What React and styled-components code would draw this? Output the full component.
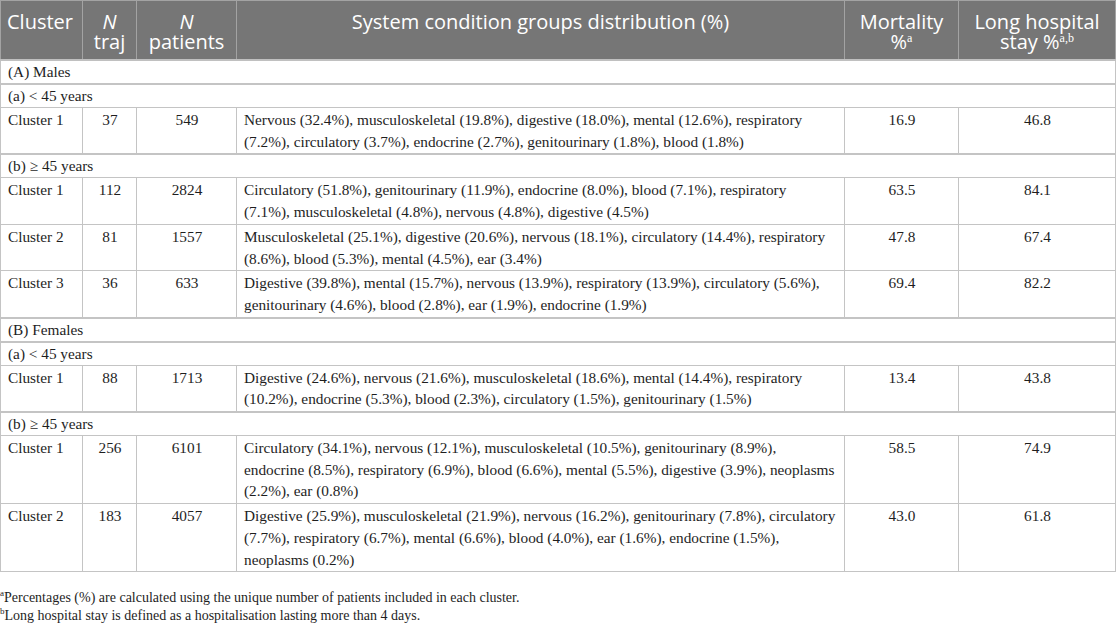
import React from 'react'
import styled, { createGlobalStyle } from 'styled-components'

const GlobalStyle = createGlobalStyle`
  html, body {
    margin: 0;
    padding: 0;
    background: #ffffff;
  }
`

const Page = styled.div`
  width: 1116px;
`

const Table = styled.table`
  width: 1115px;
  border-collapse: collapse;
  table-layout: fixed;
`

const HeadCell = styled.th`
  background: #767676;
  color: #ffffff;
  font-family: "Open Sans", "Noto Sans", sans-serif;
  font-weight: 400;
  font-size: 20px;
  line-height: 20px;
  text-align: ${p => (p.$left ? 'left' : 'center')};
  vertical-align: top;
  padding: 11px 4px 7px ${p => (p.$left ? '6px' : '4px')};
  border: 1px solid #a3a3a3;
  border-bottom: 2px solid #c0c0c0;
  white-space: nowrap;

  i {
    font-style: italic;
  }
  sup {
    font-family: "Liberation Serif", serif;
    font-size: 12px;
    line-height: 0;
    vertical-align: 7px;
  }
`

const Cell = styled.td`
  font-family: "Liberation Serif", "Times New Roman", serif;
  font-size: 15.3px;
  color: #1e1e1e;
  border: 1px solid #c4c4c4;
  line-height: 21.7px;
  padding: 1px 6px 1px 7px;
  vertical-align: top;
  white-space: nowrap;
  text-align: ${p => (p.$center ? 'center' : 'left')};
`

const GroupCell = styled.td`
  font-family: "Liberation Serif", "Times New Roman", serif;
  font-size: 15.3px;
  color: #1e1e1e;
  border: 1px solid #c4c4c4;
  border-top-width: 2px;
  line-height: 21px;
  padding: 0 7px 1px;
  text-align: left;
`

const Line = styled.div`
  white-space: nowrap;
`

const Notes = styled.div`
  font-family: "Liberation Serif", "Times New Roman", serif;
  font-size: 14px;
  color: #1e1e1e;
  line-height: 17.5px;
  padding-top: 17px;

  sup {
    font-size: 9px;
    line-height: 0;
    vertical-align: 6px;
  }
`

const groups = [
  { label: '(A) Males' },
  { label: '(a) < 45 years' },
  {
    row: ['Cluster 1', '37', '549', [
      'Nervous (32.4%), musculoskeletal (19.8%), digestive (18.0%), mental (12.6%), respiratory',
      '(7.2%), circulatory (3.7%), endocrine (2.7%), genitourinary (1.8%), blood (1.8%)',
    ], '16.9', '46.8'],
  },
  { label: '(b) \u2265 45 years' },
  {
    row: ['Cluster 1', '112', '2824', [
      'Circulatory (51.8%), genitourinary (11.9%), endocrine (8.0%), blood (7.1%), respiratory',
      '(7.1%), musculoskeletal (4.8%), nervous (4.8%), digestive (4.5%)',
    ], '63.5', '84.1'],
  },
  {
    row: ['Cluster 2', '81', '1557', [
      'Musculoskeletal (25.1%), digestive (20.6%), nervous (18.1%), circulatory (14.4%), respiratory',
      '(8.6%), blood (5.3%), mental (4.5%), ear (3.4%)',
    ], '47.8', '67.4'],
  },
  {
    row: ['Cluster 3', '36', '633', [
      'Digestive (39.8%), mental (15.7%), nervous (13.9%), respiratory (13.9%), circulatory (5.6%),',
      'genitourinary (4.6%), blood (2.8%), ear (1.9%), endocrine (1.9%)',
    ], '69.4', '82.2'],
  },
  { label: '(B) Females' },
  { label: '(a) < 45 years' },
  {
    row: ['Cluster 1', '88', '1713', [
      'Digestive (24.6%), nervous (21.6%), musculoskeletal (18.6%), mental (14.4%), respiratory',
      '(10.2%), endocrine (5.3%), blood (2.3%), circulatory (1.5%), genitourinary (1.5%)',
    ], '13.4', '43.8'],
  },
  { label: '(b) \u2265 45 years' },
  {
    row: ['Cluster 1', '256', '6101', [
      'Circulatory (34.1%), nervous (12.1%), musculoskeletal (10.5%), genitourinary (8.9%),',
      'endocrine (8.5%), respiratory (6.9%), blood (6.6%), mental (5.5%), digestive (3.9%), neoplasms',
      '(2.2%), ear (0.8%)',
    ], '58.5', '74.9'],
  },
  {
    row: ['Cluster 2', '183', '4057', [
      'Digestive (25.9%), musculoskeletal (21.9%), nervous (16.2%), genitourinary (7.8%), circulatory',
      '(7.7%), respiratory (6.7%), mental (6.6%), blood (4.0%), ear (1.6%), endocrine (1.5%),',
      'neoplasms (0.2%)',
    ], '43.0', '61.8'],
  },
]

const App = () => {
  return (
    <Page>
      <GlobalStyle />
      <Table>
        <colgroup>
          <col style={{ width: 82 }} />
          <col style={{ width: 54 }} />
          <col style={{ width: 100 }} />
          <col style={{ width: 608 }} />
          <col style={{ width: 114 }} />
          <col style={{ width: 157 }} />
        </colgroup>
        <thead>
          <tr>
            <HeadCell $left>Cluster</HeadCell>
            <HeadCell><i>N</i><br />traj</HeadCell>
            <HeadCell><i>N</i><br />patients</HeadCell>
            <HeadCell>System condition groups distribution (%)</HeadCell>
            <HeadCell>Mortality<br />%<sup>a</sup></HeadCell>
            <HeadCell>Long hospital<br />stay %<sup>a,b</sup></HeadCell>
          </tr>
        </thead>
        <tbody>
          {groups.map((g, i) =>
            g.label ? (
              <tr key={i}>
                <GroupCell colSpan={6}>{g.label}</GroupCell>
              </tr>
            ) : (
              <tr key={i}>
                <Cell>{g.row[0]}</Cell>
                <Cell $center>{g.row[1]}</Cell>
                <Cell $center>{g.row[2]}</Cell>
                <Cell>
                  {g.row[3].map((l, j) => <Line key={j}>{l}</Line>)}
                </Cell>
                <Cell $center>{g.row[4]}</Cell>
                <Cell $center>{g.row[5]}</Cell>
              </tr>
            )
          )}
        </tbody>
      </Table>
      <Notes>
        <div><sup>a</sup>Percentages (%) are calculated using the unique number of patients included in each cluster.</div>
        <div><sup>b</sup>Long hospital stay is defined as a hospitalisation lasting more than 4 days.</div>
      </Notes>
    </Page>
  )
}

export default App
